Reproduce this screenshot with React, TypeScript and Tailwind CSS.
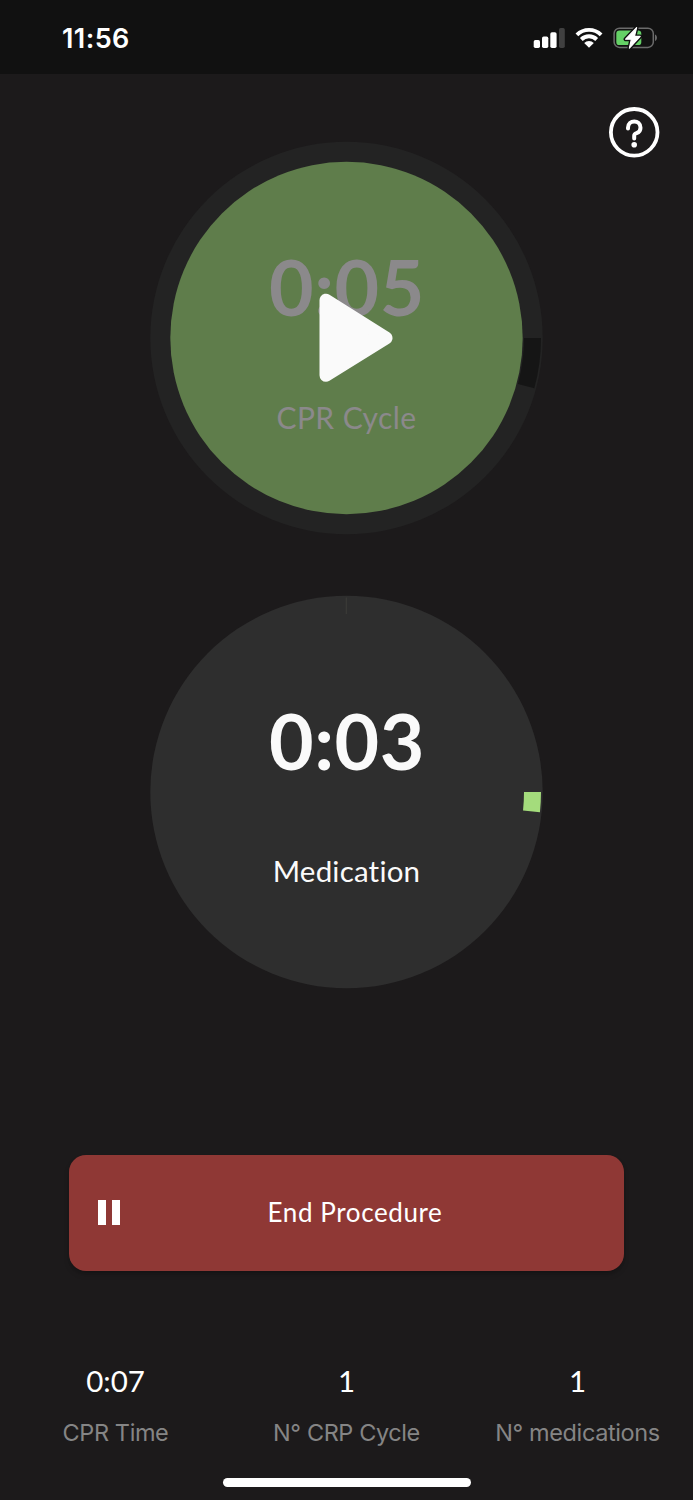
import type { ReactNode } from "react"

const polar = (r: number, deg: number) => {
  const a = (deg * Math.PI) / 180
  return `${197.5 + r * Math.cos(a)} ${198 + r * Math.sin(a)}`
}

// ring slice starting at 3 o'clock, going clockwise
const slice = (inner: number, outer: number, deg: number) =>
  `M${polar(inner, 0)} L${polar(outer, 0)} A${outer} ${outer} 0 0 1 ${polar(outer, deg)} L${polar(inner, deg)} A${inner} ${inner} 0 0 0 ${polar(inner, 0)}Z`

const StatusBar = () => {
  return (
    <header className="h-[74px] bg-[#111111] flex items-start justify-between pl-[62px] pr-[35px] pt-[22px] font-[Inter,sans-serif]">
      <span className="pt-px text-[27px] leading-8 font-semibold text-white tracking-[0.4px]">11:56</span>
      <div className="flex items-start gap-[10px] pt-[5px]">
        <svg width="32" height="22" viewBox="0 0 32 22">
          <rect x="0.7" y="13" width="6.3" height="8" rx="1.7" fill="#fff" />
          <rect x="9" y="9.6" width="6.3" height="11.4" rx="1.7" fill="#fff" />
          <rect x="17.3" y="5.3" width="6.3" height="15.7" rx="1.7" fill="#fff" />
          <rect x="26" y="1" width="5.8" height="20" rx="1.7" fill="#404040" />
        </svg>
        <svg width="28" height="22" viewBox="0 0 28 22">
          <g fill="none" stroke="#fff" strokeWidth="3.9">
            <path d="M1.9 7.9A17.2 17.2 0 0 1 26.1 7.9" />
            <path d="M6.3 12.5A10.9 10.9 0 0 1 21.7 12.5" />
          </g>
          <path d="M14 20.8L9.2 15.9A6.9 6.9 0 0 1 18.8 15.9Z" fill="#fff" />
        </svg>
        <svg width="45" height="24" viewBox="0 0 45 24" className="-mt-px">
          <rect x="1.1" y="2.2" width="39.2" height="19.2" rx="5.4" fill="none" stroke="#6b6b6b" strokeWidth="1.5" />
          <path d="M42 8.6C44.6 9.4 44.6 14.2 42 15Z" fill="#6b6b6b" />
          <rect x="3.3" y="4.5" width="25" height="14.6" rx="3.2" fill="#65d166" />
          <path d="M23.6 1.6L12.6 13.2H18.4L16.4 22.2L27.2 10.4H21.4Z" fill="#fff" stroke="#111" strokeWidth="4" strokeLinejoin="round" />
          <path d="M23.6 1.6L12.6 13.2H18.4L16.4 22.2L27.2 10.4H21.4Z" fill="#fff" stroke="#fff" strokeWidth="1.2" strokeLinejoin="round" />
        </svg>
      </div>
    </header>
  )
}

type DialProps = {
  time: string
  label: string
  labelClass: string
  textClass: string
  art: ReactNode
  overlay?: ReactNode
}

const Dial = ({ time, label, labelClass, textClass, art, overlay }: DialProps) => {
  return (
    <div className="relative w-[396px] h-[396px]">
      <svg className="absolute inset-0" width="396" height="396" viewBox="0 0 396 396">
        {art}
      </svg>
      <div className={`relative flex flex-col items-center pt-[108px] ${textClass}`}>
        <span className="pl-px font-bold text-[77px] leading-[76px] tracking-[0.5px]">{time}</span>
        <span className={`mt-[73px] leading-10 ${labelClass}`}>{label}</span>
      </div>
      {overlay}
    </div>
  )
}

const Stat = ({ value, label }: { value: string; label: string }) => {
  return (
    <div className="w-[231px] flex flex-col items-center">
      <span className="text-[29.5px] leading-9 text-white">{value}</span>
      <span className="mt-[18px] font-[Inter,sans-serif] text-[23.5px] leading-8 tracking-[-0.4px] text-[#858585] whitespace-nowrap">{label}</span>
    </div>
  )
}

const App = () => {
  return (
    <div className="w-[693px] h-[1500px] bg-[#1c1a1b] overflow-hidden flex flex-col font-[Lato,sans-serif]">
      <StatusBar />
      <div className="h-[66px] flex justify-end pt-8 pr-[33px]">
        <button className="w-[52px] h-[52px] shrink-0">
          <svg width="52" height="52" viewBox="0 0 52 52" fill="none" stroke="#fff">
            <circle cx="26.2" cy="26.3" r="23.3" strokeWidth="3.8" />
            <path d="M20 22.6V21.7C20 13.4 32.5 13.4 32.5 21.7C32.5 25 31 26.4 28.6 27.2C26.8 27.8 26.2 28.3 26.2 29.8V32.4" strokeWidth="4" strokeLinecap="round" />
            <circle cx="26.2" cy="38.7" r="2.8" fill="#fff" stroke="none" />
          </svg>
        </button>
      </div>

      <main className="flex flex-col items-center gap-[58px]">
        <Dial
          time="0:05"
          label="CPR Cycle"
          labelClass="text-[30px] tracking-[0.4px]"
          textClass="text-[#8b898b]"
          art={
            <>
              <circle cx="197.5" cy="198" r="196.2" fill="#232323" />
              <path d={slice(177.5, 194.5, 15)} fill="#151515" />
              <circle cx="197.5" cy="198" r="176.2" fill="#5f7d4b" />
            </>
          }
          overlay={
            <svg className="absolute left-[169px] top-[152px]" width="76" height="92" viewBox="0 0 76 92">
              <path d="M8 8.2V83.3L68 46Z" fill="#fafafa" stroke="#fafafa" strokeWidth="13" strokeLinejoin="round" />
            </svg>
          }
        />
        <Dial
          time="0:03"
          label="Medication"
          labelClass="text-[29.5px] tracking-[0.2px] [font-variant-ligatures:none]"
          textClass="text-[#fafafa]"
          art={
            <>
              <circle cx="197.5" cy="198" r="196.2" fill="#2e2e2e" />
              <path d="M197.3 3.5V20" stroke="#3a3a37" strokeWidth="1.3" />
              <path d={slice(177.5, 194.5, 6)} fill="#a4dc7c" />
            </>
          }
        />
      </main>

      <button className="mt-[165px] mx-[69px] h-[115.5px] shrink-0 rounded-[17px] bg-[#8f3835] text-white shadow-md shadow-black/20 flex items-center">
        <span className="ml-[29px] flex gap-[6px]">
          <span className="w-2 h-[25px] bg-white" />
          <span className="w-2 h-[25px] bg-white" />
        </span>
        <span className="grow pr-[34px] pb-0.5 text-center text-[26px] leading-9 tracking-[0.6px]">End Procedure</span>
      </button>

      <footer className="mt-[92px] flex flex-col items-center">
        <div className="flex">
          <Stat value="0:07" label="CPR Time" />
          <Stat value="1" label="N° CRP Cycle" />
          <Stat value="1" label="N° medications" />
        </div>
        <div className="mt-[29px] w-[248px] h-[9px] rounded-full bg-white" />
      </footer>
    </div>
  )
}

export default App
